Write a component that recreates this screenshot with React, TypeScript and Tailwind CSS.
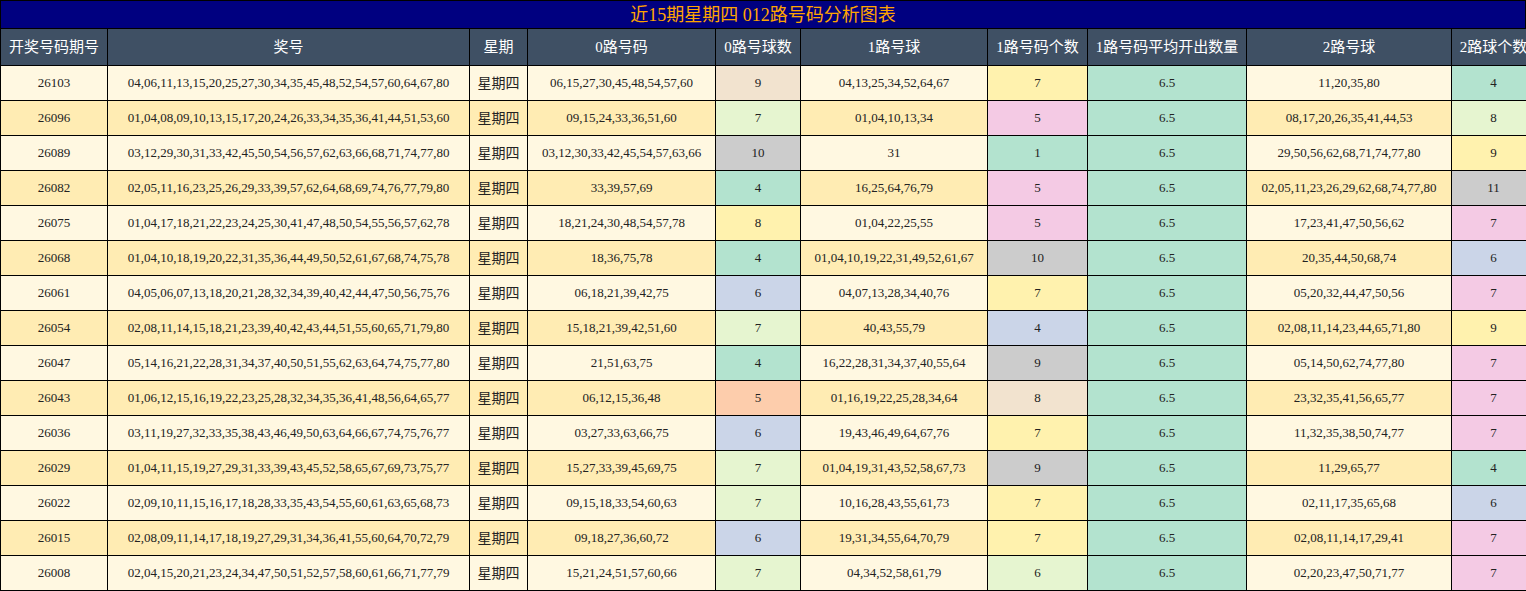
import React from "react";

const rows: [string, string, string, string, string, string, string, string][] = [
  ["26103", "04,06,11,13,15,20,25,27,30,34,35,45,48,52,54,57,60,64,67,80", "06,15,27,30,45,48,54,57,60", "9", "04,13,25,34,52,64,67", "7", "11,20,35,80", "4"],
  ["26096", "01,04,08,09,10,13,15,17,20,24,26,33,34,35,36,41,44,51,53,60", "09,15,24,33,36,51,60", "7", "01,04,10,13,34", "5", "08,17,20,26,35,41,44,53", "8"],
  ["26089", "03,12,29,30,31,33,42,45,50,54,56,57,62,63,66,68,71,74,77,80", "03,12,30,33,42,45,54,57,63,66", "10", "31", "1", "29,50,56,62,68,71,74,77,80", "9"],
  ["26082", "02,05,11,16,23,25,26,29,33,39,57,62,64,68,69,74,76,77,79,80", "33,39,57,69", "4", "16,25,64,76,79", "5", "02,05,11,23,26,29,62,68,74,77,80", "11"],
  ["26075", "01,04,17,18,21,22,23,24,25,30,41,47,48,50,54,55,56,57,62,78", "18,21,24,30,48,54,57,78", "8", "01,04,22,25,55", "5", "17,23,41,47,50,56,62", "7"],
  ["26068", "01,04,10,18,19,20,22,31,35,36,44,49,50,52,61,67,68,74,75,78", "18,36,75,78", "4", "01,04,10,19,22,31,49,52,61,67", "10", "20,35,44,50,68,74", "6"],
  ["26061", "04,05,06,07,13,18,20,21,28,32,34,39,40,42,44,47,50,56,75,76", "06,18,21,39,42,75", "6", "04,07,13,28,34,40,76", "7", "05,20,32,44,47,50,56", "7"],
  ["26054", "02,08,11,14,15,18,21,23,39,40,42,43,44,51,55,60,65,71,79,80", "15,18,21,39,42,51,60", "7", "40,43,55,79", "4", "02,08,11,14,23,44,65,71,80", "9"],
  ["26047", "05,14,16,21,22,28,31,34,37,40,50,51,55,62,63,64,74,75,77,80", "21,51,63,75", "4", "16,22,28,31,34,37,40,55,64", "9", "05,14,50,62,74,77,80", "7"],
  ["26043", "01,06,12,15,16,19,22,23,25,28,32,34,35,36,41,48,56,64,65,77", "06,12,15,36,48", "5", "01,16,19,22,25,28,34,64", "8", "23,32,35,41,56,65,77", "7"],
  ["26036", "03,11,19,27,32,33,35,38,43,46,49,50,63,64,66,67,74,75,76,77", "03,27,33,63,66,75", "6", "19,43,46,49,64,67,76", "7", "11,32,35,38,50,74,77", "7"],
  ["26029", "01,04,11,15,19,27,29,31,33,39,43,45,52,58,65,67,69,73,75,77", "15,27,33,39,45,69,75", "7", "01,04,19,31,43,52,58,67,73", "9", "11,29,65,77", "4"],
  ["26022", "02,09,10,11,15,16,17,18,28,33,35,43,54,55,60,61,63,65,68,73", "09,15,18,33,54,60,63", "7", "10,16,28,43,55,61,73", "7", "02,11,17,35,65,68", "6"],
  ["26015", "02,08,09,11,14,17,18,19,27,29,31,34,36,41,55,60,64,70,72,79", "09,18,27,36,60,72", "6", "19,31,34,55,64,70,79", "7", "02,08,11,14,17,29,41", "7"],
  ["26008", "02,04,15,20,21,23,24,34,47,50,51,52,57,58,60,61,66,71,77,79", "15,21,24,51,57,60,66", "7", "04,34,52,58,61,79", "6", "02,20,23,47,50,71,77", "7"],
];

const beige = "bg-[#f2e3cf]";
const lg = "bg-[#e6f5d0]";
const gray = "bg-[#cccccc]";
const mint = "bg-[#b3e3cf]";
const yellow = "bg-[#fff2ae]";
const blue = "bg-[#cbd5e8]";
const pink = "bg-[#f4cae4]";
const peach = "bg-[#fdcdac]";

const c0: Record<string, string> = { "9": beige, "7": lg, "10": gray, "4": mint, "8": yellow, "6": blue, "5": peach };
const c1: Record<string, string> = { "7": yellow, "5": pink, "1": mint, "10": gray, "4": blue, "9": gray, "8": beige, "6": lg };
const c2: Record<string, string> = { "4": mint, "8": lg, "9": yellow, "11": gray, "7": pink, "6": blue };

const headers = ["开奖号码期号", "奖号", "星期", "0路号码", "0路号球数", "1路号球", "1路号码个数", "1路号码平均开出数量", "2路号球", "2路球个数"];
const cols = "grid-cols-[106px_361px_57px_187px_84px_186px_99px_158px_204px_83px]";

const App = () => {
  return (
    <div className="w-[1526px] bg-black" style={{ fontFamily: '"Liberation Serif", "Noto Sans CJK SC", serif' }}>
      <div className="border border-black">
        {/* title */}
        <div className="h-[27px] bg-[#000080] text-[#ffa500] text-lg flex items-center justify-center">近15期星期四 012路号码分析图表</div>
        <div className={`grid ${cols} gap-px bg-black pt-px`}>
          {headers.map((h) => (
            <div key={h} className="h-[36px] bg-[#3f5064] text-white text-[15px] flex items-center justify-center whitespace-nowrap">{h}</div>
          ))}
          {rows.map((r, i) => {
            const base = i % 2 === 0 ? "bg-[#fff8e1]" : "bg-[#ffecb3]";
            const cells: [string, string][] = [
              [r[0], base], [r[1], base], ["星期四", base], [r[2], base], [r[3], c0[r[3]]],
              [r[4], base], [r[5], c1[r[5]]], ["6.5", mint], [r[6], base], [r[7], c2[r[7]]],
            ];
            return cells.map(([t, bg], j) => (
              <div key={`${i}-${j}`} className={`h-[34px] ${bg} text-[#222] text-[13px] flex items-center justify-center whitespace-nowrap ${j === 2 ? "text-[14px]" : ""}`}>{t}</div>
            ));
          })}
        </div>
      </div>
    </div>
  );
};

export default App;
